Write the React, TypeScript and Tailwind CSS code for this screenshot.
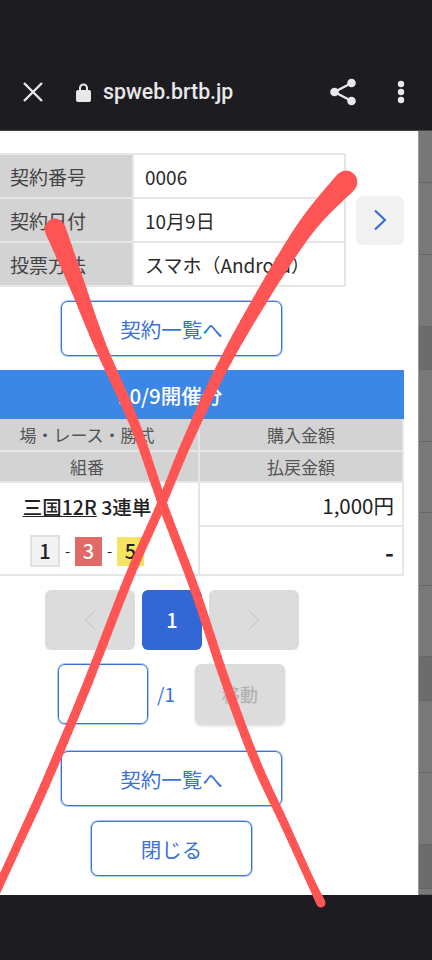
import React from "react";

const cjk = { fontFamily: '"Noto Sans CJK JP", "Noto Sans", sans-serif' };

type P = [number, number, number];

function Stroke({ pts }: { pts: P[] }) {
  const out: P[] = [];
  for (let i = 0; i < pts.length - 1; i++) {
    const p0 = pts[Math.max(i - 1, 0)];
    const p1 = pts[i];
    const p2 = pts[i + 1];
    const p3 = pts[Math.min(i + 2, pts.length - 1)];
    for (let s = 0; s < 12; s++) {
      const t = s / 12;
      const f = (k: number) =>
        0.5 *
        (2 * p1[k] +
          (p2[k] - p0[k]) * t +
          (2 * p0[k] - 5 * p1[k] + 4 * p2[k] - p3[k]) * t * t +
          (3 * p1[k] - p0[k] - 3 * p2[k] + p3[k]) * t * t * t);
      out.push([f(0), f(1), f(2)]);
    }
  }
  out.push(pts[pts.length - 1]);
  return (
    <g stroke="#ff5555" strokeLinecap="round" fill="none">
      {out.slice(1).map((p, i) => (
        <line key={i} x1={out[i][0]} y1={out[i][1]} x2={p[0]} y2={p[1]} strokeWidth={p[2]} />
      ))}
    </g>
  );
}

function OutlineButton({ label, w }: { label: string; w: string }) {
  return (
    <button className={`${w} h-[55px] border border-[#3a72d8] shadow-[0_0_0_1px_rgba(63,120,216,0.4)] rounded-[7px] bg-white text-[20.5px] text-[#3a72d8] flex items-center justify-center pt-[2px]`}>
      {label}
    </button>
  );
}

function InfoRow({ k, v }: { k: string; v: string }) {
  return (
    <div className="flex h-[44px] border-b-2 border-[#e6e6e6]">
      <div className="w-[132px] bg-[#d3d3d3] pl-[10px] pt-[2px] flex items-center text-[19px] text-[#444444]">{k}</div>
      <div className="flex-1 border-l-2 border-[#e6e6e6] pl-[11px] pt-[2px] flex items-center text-[19px] text-[#2a2a2a]">{v}</div>
    </div>
  );
}

const stripRows: [string, string][] = [
  ["h-[52px]", "bg-[#777777]"],
  ["h-[72px]", "bg-[#787878]"],
  ["h-[72px]", "bg-[#787878]"],
  ["h-[43px]", "bg-[#6c6c6c]"],
  ["h-[72px]", "bg-[#787878]"],
  ["h-[71px]", "bg-[#787878]"],
  ["h-[73px]", "bg-[#787878]"],
  ["h-[71px]", "bg-[#787878]"],
  ["h-[44px]", "bg-[#6c6c6c]"],
  ["h-[72px]", "bg-[#787878]"],
  ["h-[72px]", "bg-[#787878]"],
  ["h-[44px]", "bg-[#6c6c6c]"],
  ["h-[6px]", "bg-[#787878]"],
];

export default function App() {
  return (
    <div className="relative w-[432px] h-[960px] overflow-hidden bg-[#1c1c21] flex flex-col" style={cjk}>
      <header className="h-[131px] shrink-0 border-b border-[#444444] flex items-end pb-[18px] pl-[23px] pr-[27px] text-[#e8e8e8]">
        <div className="flex items-center w-full h-[40px]">
          <svg width="20" height="20" viewBox="0 0 20 20" stroke="#e8e8e8" strokeWidth="2.4" fill="none">
            <path d="M1 1 L19 19 M19 1 L1 19" />
          </svg>
          <svg className="ml-[33px]" width="15" height="19" viewBox="0 0 15 19" fill="#e8e8e8">
            <path d="M2 7h1V5a4.500 4.500 0 0 1 9 0v2h1a2 2 0 0 1 2 2v8a2 2 0 0 1-2 2H2a2 2 0 0 1-2-2V9a2 2 0 0 1 2-2zM5 7h5V5a2.500 2.500 0 0 0-5 0z" />
          </svg>
          <span className="ml-[12px] text-[21.3px] font-medium" style={{ fontFamily: "Roboto, sans-serif" }}>spweb.brtb.jp</span>
          <svg className="ml-auto" width="26" height="28" viewBox="0 0 26 28" fill="#e8e8e8" stroke="#e8e8e8">
            <circle cx="21.500" cy="5" r="4.300" stroke="none" />
            <circle cx="4.500" cy="14" r="4.300" stroke="none" />
            <circle cx="21.500" cy="23" r="4.300" stroke="none" />
            <path d="M21.500 5 L4.500 14 L21.500 23" strokeWidth="2.4" fill="none" />
          </svg>
          <svg className="ml-[41px]" width="8" height="24" viewBox="0 0 8 24" fill="#e8e8e8">
            <circle cx="4" cy="4" r="3.2" />
            <circle cx="4" cy="12" r="3.2" />
            <circle cx="4" cy="20" r="3.2" />
          </svg>
        </div>
      </header>

      <div className="flex h-[764px] shrink-0">
        <main className="w-[418px] bg-white pt-[22px] overflow-hidden">
          <div className="flex items-center h-[134px]">
            <div className="w-[346px] border-t-2 border-r-2 border-[#e6e6e6]">
              <InfoRow k="契約番号" v="0006" />
              <InfoRow k="契約日付" v="10月9日" />
              <InfoRow k="投票方法" v="スマホ（Android）" />
            </div>
            <button className="ml-[10px] w-[48px] h-[49px] rounded-[6px] bg-[#f2f2f2] flex items-center justify-center">
              <svg width="14" height="22" viewBox="0 0 14 22" fill="none" stroke="#3068d4" strokeWidth="2">
                <path d="M2 1.500 L12 11 L2 20.500" />
              </svg>
            </button>
          </div>

          <div className="mt-[14px] ml-[61px]">
            <OutlineButton label="契約一覧へ" w="w-[221px]" />
          </div>

          <section className="mt-[14px] ml-[-24px] w-[428px]">
            <div className="h-[49px] bg-[#3c87e6] flex items-center justify-center pr-[40px] pt-[2px] text-white text-[20.5px] font-medium">10/9開催分</div>
            <div className="grid grid-cols-[222px_206px] text-[17px] text-[#555555]">
              <div className="h-[33px] bg-[#d3d3d3] flex items-center justify-center border-b-2 border-[#e6e6e6]">場・レース・勝式</div>
              <div className="h-[33px] bg-[#d3d3d3] flex items-center justify-center border-b-2 border-l-2 border-r-2 border-[#e6e6e6]">購入金額</div>
              <div className="h-[31px] bg-[#d3d3d3] flex items-center justify-center border-b-2 border-[#e6e6e6]">組番</div>
              <div className="h-[31px] bg-[#d3d3d3] flex items-center justify-center border-b-2 border-l-2 border-r-2 border-[#e6e6e6]">払戻金額</div>
            </div>
            <div className="grid grid-cols-[222px_206px] h-[93px] border-b-2 border-[#e6e6e6]">
              <div className="flex flex-col items-center pt-[10px]">
                <div className="text-[19.5px] leading-[28px] font-medium text-[#222222]">
                  <span className="underline">三国12R</span> 3連単
                </div>
                <div className="mt-[14px] flex items-center text-[20px] font-medium text-[#222222]">
                  <span className="w-[30px] h-[32px] bg-[#f2f2f2] border-2 border-[#e0e0e0] flex items-center justify-center">1</span>
                  <span className="w-[15px] text-center text-[15px] font-normal">-</span>
                  <span className="w-[27px] h-[29px] bg-[#e06a66] text-white flex items-center justify-center">3</span>
                  <span className="w-[15px] text-center text-[15px] font-normal">-</span>
                  <span className="w-[27px] h-[29px] bg-[#f6e465] flex items-center justify-center">5</span>
                </div>
              </div>
              <div className="border-l-2 border-r-2 border-[#e6e6e6] flex flex-col text-right text-[20.5px] text-[#222222]">
                <div className="h-[44px] border-b-2 border-[#e6e6e6] pr-[8px] pt-[2px] flex items-center justify-end">1,000円</div>
                <div className="flex-1 pr-[8px] flex items-center justify-end text-[24px] font-bold pt-[2px]">-</div>
              </div>
            </div>
          </section>

          <div className="mt-[14px] ml-[45px] flex gap-[7px] h-[60px]">
            <div className="w-[90px] rounded-[6px] bg-[#dcdcdc] flex items-center justify-center">
              <svg width="12" height="20" viewBox="0 0 12 20" fill="none" stroke="#cdcdcd" strokeWidth="1.500"><path d="M11 1 L1 10 L11 19" /></svg>
            </div>
            <div className="w-[60px] rounded-[6px] bg-[#3367d6] text-white text-[20px] font-medium flex items-center justify-center">1</div>
            <div className="w-[90px] rounded-[6px] bg-[#dcdcdc] flex items-center justify-center">
              <svg width="12" height="20" viewBox="0 0 12 20" fill="none" stroke="#cdcdcd" strokeWidth="1.500"><path d="M1 1 L11 10 L1 19" /></svg>
            </div>
          </div>

          <div className="mt-[14px] ml-[58px] flex items-center h-[60px]">
            <div className="w-[90px] h-[60px] border border-[#3a72d8] shadow-[0_0_0_1px_rgba(63,120,216,0.4)] rounded-[7px]" />
            <span className="ml-[9px] text-[19px] text-[#3a72d8]">/1</span>
            <button className="ml-[20px] w-[90px] h-[60px] rounded-[6px] bg-[#dcdcdc] text-[#b2b2b2] text-[18px] font-medium shadow-[0_2px_3px_rgba(0,0,0,0.15)]">移動</button>
          </div>

          <div className="mt-[27px] ml-[61px]">
            <OutlineButton label="契約一覧へ" w="w-[221px]" />
          </div>
          <div className="mt-[15px] ml-[91px]">
            <OutlineButton label="閉じる" w="w-[161px]" />
          </div>
        </main>
        <aside className="w-[14px] border-l border-[#999999] flex flex-col">
          {stripRows.map(([h, bg], i) => (
            <div key={i} className={`${h} ${bg} border-b border-[#666666] shrink-0`} />
          ))}
        </aside>
      </div>

      <svg className="absolute left-0 top-0 pointer-events-none" width="432" height="960" viewBox="0 0 432 960">
        <Stroke pts={[[55, 229, 21], [76, 282, 16], [100, 345, 12], [135, 425, 10], [163, 505, 9], [195, 590, 9], [225, 680, 9], [255, 760, 9], [285, 825, 8.5], [310, 880, 8], [321, 903, 9]]} />
        <Stroke pts={[[346, 182, 23], [310, 222, 18], [275, 275, 15], [226, 360, 12], [188, 440, 10], [161, 505, 9], [128, 580, 9], [85, 690, 9], [45, 785, 9], [20, 840, 8.5], [-4, 892, 8.5]]} />
      </svg>
    </div>
  );
}
